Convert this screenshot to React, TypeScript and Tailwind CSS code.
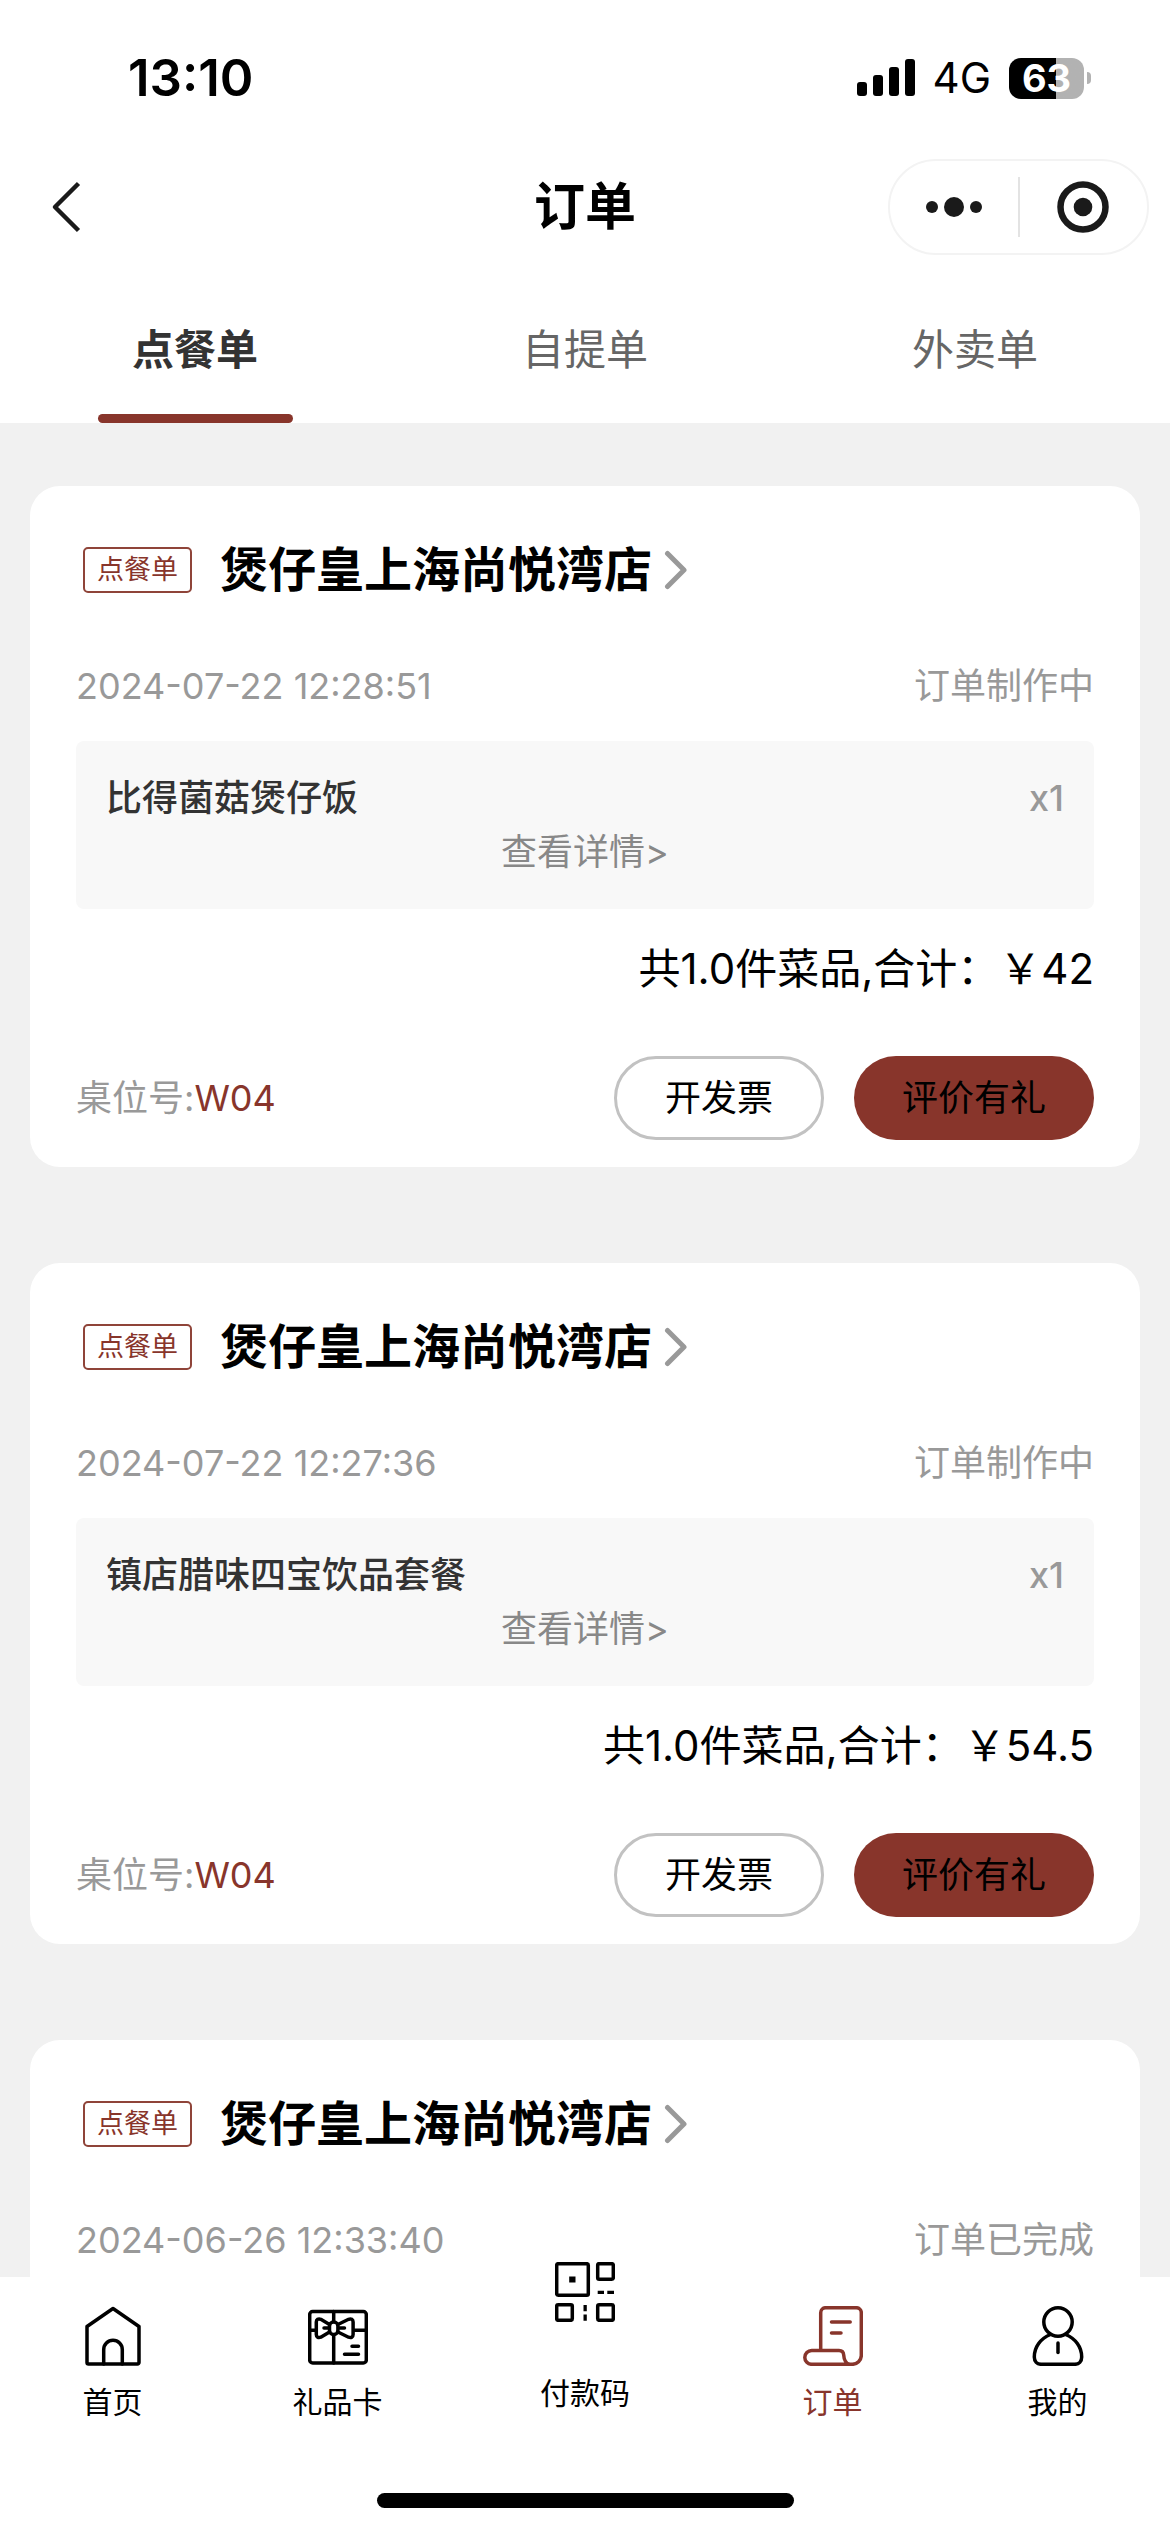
import React, { useState } from 'react';

interface OrderItem {
  name: string;
  count: number;
}

interface Order {
  id: string;
  type: string;
  store: string;
  time: string;
  status: string;
  items: OrderItem[];
  total?: string;
  table?: string;
}

const orders: Order[] = [
  {
    id: '1',
    type: '点餐单',
    store: '煲仔皇上海尚悦湾店',
    time: '2024-07-22 12:28:51',
    status: '订单制作中',
    items: [{ name: '比得菌菇煲仔饭', count: 1 }],
    total: '42',
    table: 'W04',
  },
  {
    id: '2',
    type: '点餐单',
    store: '煲仔皇上海尚悦湾店',
    time: '2024-07-22 12:27:36',
    status: '订单制作中',
    items: [{ name: '镇店腊味四宝饮品套餐', count: 1 }],
    total: '54.5',
    table: 'W04',
  },
  {
    id: '3',
    type: '点餐单',
    store: '煲仔皇上海尚悦湾店',
    time: '2024-06-26 12:33:40',
    status: '订单已完成',
    items: [],
  },
];

const tabs = ['点餐单', '自提单', '外卖单'];

const StatusBar: React.FC = () => (
  <div className="flex h-[156px] items-center justify-between pr-[79px] pl-[128px]">
    <span className="text-[51px] leading-[60px] font-semibold">13:10</span>
    <div className="flex items-center">
      <svg className="h-[38px] w-[58px]" viewBox="0 0 58 38" fill="currentColor">
        <rect x="0" y="23" width="10" height="14" rx="3" />
        <rect x="16" y="16" width="10" height="21" rx="3" />
        <rect x="32" y="8" width="10" height="29" rx="3" />
        <rect x="48" y="0" width="10" height="37" rx="3" />
      </svg>
      <span className="ml-[18px] text-[42px] leading-[48px]">4G</span>
      <div className="ml-[18px] flex items-center gap-[3px]">
        <div className="flex h-[41px] w-[75px] items-center justify-center rounded-[12px] bg-linear-to-r from-black from-63% to-[#b2b2b2] to-63% text-[38px] leading-[41px] font-bold text-white">
          63
        </div>
        <div className="h-[12px] w-[4px] rounded-r-full bg-[#b2b2b2]" />
      </div>
    </div>
  </div>
);

const NavBar: React.FC = () => (
  <div className="grid h-[102px] grid-cols-[1fr_auto_1fr] items-center px-[21px]">
    <button type="button" aria-label="返回" className="justify-self-start pl-[30px]">
      <svg className="h-[52px] w-[30px]" viewBox="0 0 30 52" fill="none" stroke="#1a1a1a" strokeWidth="4.5">
        <path d="M27.5 2.5L4 26l23.5 23.5" strokeLinejoin="round" />
      </svg>
    </button>
    <h1 className="text-[51px] leading-[60px] font-bold">订单</h1>
    <div className="flex h-[96px] w-[261px] items-center justify-self-end rounded-full border-2 border-[#f3f3f3]">
      <button type="button" aria-label="更多" className="flex flex-1 items-center justify-center">
        <svg className="h-[20px] w-[56px]" viewBox="0 0 56 20" fill="#1a1a1a">
          <circle cx="6" cy="10" r="6" />
          <circle cx="28" cy="10" r="10" />
          <circle cx="50" cy="10" r="6" />
        </svg>
      </button>
      <div className="h-[60px] w-[2px] bg-[#e3e3e3]" />
      <button type="button" aria-label="关闭" className="flex flex-1 items-center justify-center">
        <svg className="h-[52px] w-[52px]" viewBox="0 0 52 52" fill="none">
          <circle cx="26" cy="26" r="22.5" stroke="#1a1a1a" strokeWidth="6.5" />
          <circle cx="26" cy="26" r="9.3" fill="#1a1a1a" />
        </svg>
      </button>
    </div>
  </div>
);

const OrderCard: React.FC<{ order: Order }> = ({ order }) => (
  <article className="min-h-[300px] shrink-0 rounded-[30px] bg-white px-[46px] pt-[54px] pb-[27px]">
    <a href="#store" className="ml-[7px] flex h-[60px] items-center">
      <span className="flex h-[46px] w-[109px] items-center justify-center rounded-[5px] border-2 border-[#8f4439] text-[27px] leading-[36px] text-[#88352b]">
        {order.type}
      </span>
      <h2 className="ml-[28px] text-[48px] leading-[60px] font-bold">{order.store}</h2>
      <svg className="ml-[12px] h-[40px] w-[24px]" viewBox="0 0 24 40" fill="none" stroke="#999" strokeWidth="5" strokeLinecap="round" strokeLinejoin="round">
        <path d="M3.5 3.5L20 20 3.5 36.5" />
      </svg>
    </a>
    <div className="mt-[62px] flex justify-between text-[36px] leading-[48px] text-[#999]">
      <time>{order.time}</time>
      <span>{order.status}</span>
    </div>
    {order.items.length > 0 && (
      <div className="mt-[31px] rounded-[8px] bg-[#f8f8f8] p-[30px] text-[36px] leading-[54px]">
        {order.items.map((item) => (
          <div key={item.name} className="flex justify-between font-medium">
            <span className="text-[#333]">{item.name}</span>
            <span className="text-[#999]">x{item.count}</span>
          </div>
        ))}
        <a href="#detail" className="block text-center text-[#888]">
          查看详情&gt;
        </a>
      </div>
    )}
    {order.total && (
      <p className="mt-[30px] text-right text-[42px] leading-[60px]">
        共1.0件菜品,合计：￥{order.total}
      </p>
    )}
    {order.table && (
      <div className="mt-[57px] flex items-center text-[36px] leading-[48px]">
        <span className="flex-1 text-[#999]">
          桌位号:<span className="text-[#88352b]">{order.table}</span>
        </span>
        <button type="button" className="h-[84px] w-[210px] rounded-full border-3 border-[#c2c2c2]">
          开发票
        </button>
        <button type="button" className="ml-[30px] h-[84px] w-[240px] rounded-full bg-[#88352b]">
          评价有礼
        </button>
      </div>
    )}
  </article>
);

const HomeIcon = () => (
  <>
    <path d="M4 20.5L30 2.5l26 18v36a1.5 1.5 0 0 1-1.5 1.5h-49A1.5 1.5 0 0 1 4 56.5z" />
    <path d="M20.7 58V43.5a9.3 9.3 0 0 1 18.6 0V58" />
  </>
);

const GiftIcon = () => (
  <>
    <rect x="1.7" y="5.5" width="56.6" height="51.5" rx="3" />
    <path d="M25.7 5.5v10M25.7 29v28M1.7 24.3h6.6M46 24.3h12.3" />
    <path d="M21.5 18.5l-8.7-5.2c-2.5-1-4.5.2-4.5 2.7v12.5c0 2.5 2 3.7 4.5 2.7l8.7-5.2" />
    <path d="M29.9 18.5l10.7-5.2c2.5-1 4.5.2 4.5 2.7v12.5c0 2.5-2 3.7-4.5 2.7l-10.7-5.2" />
    <rect x="21.5" y="16" width="8.4" height="12.5" rx="4" />
    <path d="M16 22h4M31.5 22h5M44 40.3h6.5M36.5 48.2h14" />
  </>
);

const QrIcon = () => (
  <>
    <rect x="1.7" y="1.7" width="31.6" height="31.6" rx="1.5" />
    <rect x="42.7" y="1.7" width="15.6" height="15.6" rx="1.5" />
    <rect x="1.7" y="42.7" width="15.6" height="15.6" rx="1.5" />
    <rect x="42.7" y="42.7" width="15.6" height="15.6" rx="1.5" />
    <path
      d="M14.2 14.5h6.3v6h-6.3zM42.7 28.7H49V32h-6.3zM52.3 28.7H59V32h-6.7zM28.5 43h3.3v6.2h-3.3zM28.5 52.5h3.3v6.2h-3.3z"
      fill="currentColor"
      stroke="none"
    />
  </>
);

const OrderIcon = () => (
  <>
    <path d="M17.7 44.5V6.7a5 5 0 0 1 5-5h30.6a5 5 0 0 1 5 5v42.8a9 9 0 0 1-9 8.8H8.7a6.9 6.9 0 0 1 0-13.8H36c3 0 4.5 1.7 4.7 4.5.3 5 2 8.5 6 9.3" />
    <path d="M28.5 16h18.7M28.5 27H38" />
  </>
);

const UserIcon = () => (
  <>
    <circle cx="30" cy="16" r="14.2" />
    <path d="M22.5 28.5C12.5 32.5 6.3 41 6.3 51c0 4.5 2.7 7.3 7 7.3h33.4c4.3 0 7-2.8 7-7.3 0-10-6.2-18.5-16.2-22.5" />
    <path d="M30 37v9.5" />
  </>
);

const navItems = [
  { label: '首页', icon: HomeIcon },
  { label: '礼品卡', icon: GiftIcon },
  { label: '付款码', icon: QrIcon, raised: true },
  { label: '订单', icon: OrderIcon, active: true },
  { label: '我的', icon: UserIcon },
];

const BottomNav: React.FC = () => (
  <footer className="bg-white pt-[29px] pb-6">
    <nav className="grid h-[114px] grid-cols-[5fr_5fr_6fr_5fr_5fr]">
      {navItems.map(({ label, icon: Icon, raised, active }) => (
        <a
          key={label}
          href="#nav"
          className={`flex flex-col items-center ${raised ? '-mt-[44px] gap-[53px]' : 'gap-[18px]'} ${active ? 'text-[#88352b]' : 'text-black'}`}
        >
          <svg className="h-[60px] w-[60px] shrink-0" viewBox="0 0 60 60" fill="none" stroke="currentColor" strokeWidth="3.5" strokeLinecap="round" strokeLinejoin="round">
            <Icon />
          </svg>
          <span className="text-[30px] leading-[36px]">{label}</span>
        </a>
      ))}
    </nav>
    <div className="mx-auto mt-[73px] h-[15px] w-[417px] rounded-full bg-black" />
  </footer>
);

const App: React.FC = () => {
  const [activeTab, setActiveTab] = useState(0);

  return (
    <div lang="zh-CN" className="flex h-dvh flex-col bg-[#f1f1f1] font-['Inter','Noto_Sans_CJK_SC',sans-serif] text-black">
      <header className="bg-white">
        <StatusBar />
        <NavBar />
        <div role="tablist" className="grid grid-cols-3">
          {tabs.map((tab, index) => (
            <button
              key={tab}
              type="button"
              role="tab"
              aria-selected={index === activeTab}
              onClick={() => setActiveTab(index)}
              className={`flex flex-col items-center gap-[34px] pt-[62px] text-[42px] leading-[60px] ${
                index === activeTab ? 'font-bold text-[#333]' : 'text-[#666]'
              }`}
            >
              {tab}
              <span className={`h-[9px] w-1/2 rounded-full ${index === activeTab ? 'bg-[#88352b]' : ''}`} />
            </button>
          ))}
        </div>
      </header>
      <main className="flex min-h-0 flex-1 flex-col gap-[96px] overflow-y-auto px-[30px] pt-[63px] [scrollbar-width:none]">
        {orders.map((order) => (
          <OrderCard key={order.id} order={order} />
        ))}
      </main>
      <BottomNav />
    </div>
  );
};

export default App;
